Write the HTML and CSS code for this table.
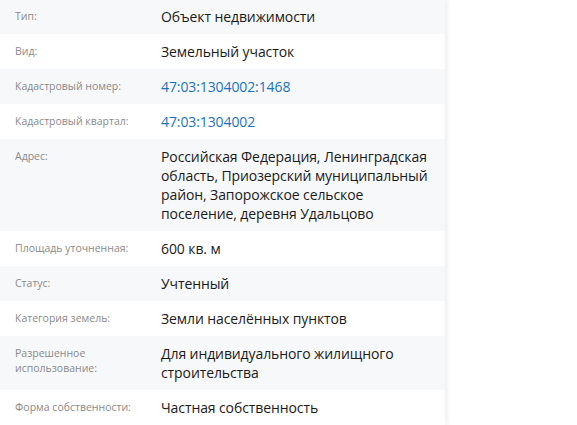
FILE: index.html
```html
<!DOCTYPE html>
<html lang="ru">
<head>
    <meta charset="UTF-8">
    <meta name="viewport" content="width=device-width, initial-scale=1.0">
    <title>Объект недвижимости</title>
    <link rel="stylesheet" href="styles.css">
</head>
<body>
    <div class="info-panel">
        <div class="info-row">
            <div class="info-label">Тип:</div>
            <div class="info-value">Объект недвижимости</div>
        </div>
        <div class="info-row">
            <div class="info-label">Вид:</div>
            <div class="info-value">Земельный участок</div>
        </div>
        <div class="info-row">
            <div class="info-label">Кадастровый номер:</div>
            <div class="info-value"><a href="#" class="info-link">47:03:1304002:1468</a></div>
        </div>
        <div class="info-row">
            <div class="info-label">Кадастровый квартал:</div>
            <div class="info-value"><a href="#" class="info-link">47:03:1304002</a></div>
        </div>
        <div class="info-row">
            <div class="info-label">Адрес:</div>
            <div class="info-value">Российская Федерация, Ленинградская область, Приозерский муниципальный район, Запорожское сельское поселение, деревня Удальцово</div>
        </div>
        <div class="info-row">
            <div class="info-label">Площадь уточненная:</div>
            <div class="info-value">600 кв. м</div>
        </div>
        <div class="info-row">
            <div class="info-label">Статус:</div>
            <div class="info-value">Учтенный</div>
        </div>
        <div class="info-row">
            <div class="info-label">Категория земель:</div>
            <div class="info-value">Земли населённых пунктов</div>
        </div>
        <div class="info-row">
            <div class="info-label">Разрешенное использование:</div>
            <div class="info-value">Для индивидуального жилищного строительства</div>
        </div>
        <div class="info-row">
            <div class="info-label">Форма собственности:</div>
            <div class="info-value">Частная собственность</div>
        </div>
    </div>
</body>
</html>
```

FILE: styles.css
```css
* {
    margin: 0;
    padding: 0;
    box-sizing: border-box;
}

body {
    font-family: "Open Sans", "Noto Sans", sans-serif;
    background-color: #fff;
    color: #1a1a1a;
    overflow: hidden;
}

.info-panel {
    width: 445px;
    margin-top: -1px;
    background-color: #fff;
    box-shadow: 2px 0 5px rgba(0, 0, 0, 0.08);
}

.info-row {
    display: grid;
    grid-template-columns: 146px 1fr;
    padding: 8px 10px 8px 15px;
}

.info-row:nth-child(odd) {
    background-color: #f7f8fa;
}

.info-label {
    font-size: 10.5px;
    line-height: 15px;
    padding-top: 2px;
    color: #8a8a8a;
}

.info-value {
    font-size: 14px;
    line-height: 19px;
    letter-spacing: -0.1px;
}

.info-link {
    color: #1a73c0;
    text-decoration: none;
}
```
